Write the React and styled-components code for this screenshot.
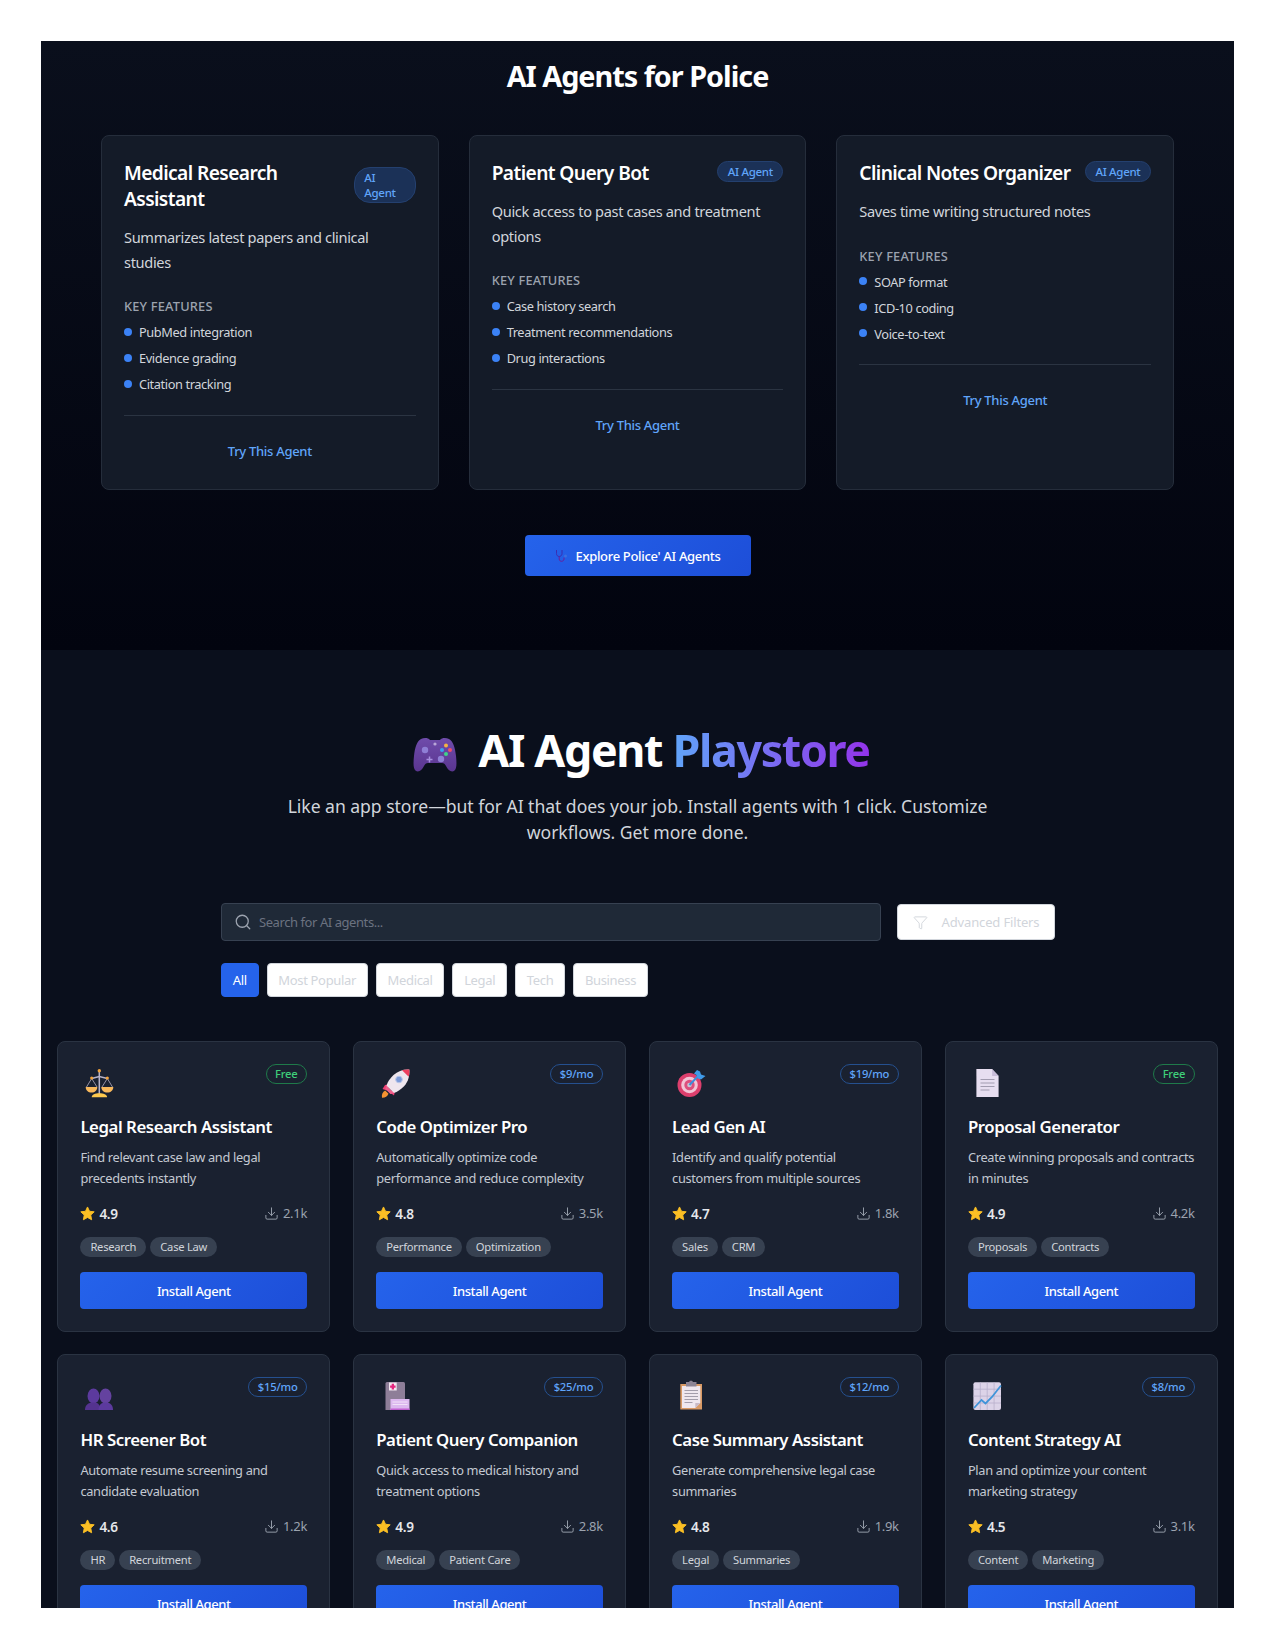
import React from 'react';
import styled, { createGlobalStyle } from 'styled-components';
import { Search, Filter, Download } from 'lucide-react';

const GlobalStyle = createGlobalStyle`
  * { box-sizing: border-box; }
  body {
    margin: 0;
    background: #fff;
    font-family: "Noto Sans", "Open Sans", "Liberation Sans", sans-serif;
  }
`;

const Controller = () => (
  <svg width="60" height="40" viewBox="0 0 60 40">
    <defs>
      <linearGradient id="padFill" x1="0" y1="0" x2="0" y2="1">
        <stop offset="0" stopColor="#6f4cab" />
        <stop offset="1" stopColor="#5a3590" />
      </linearGradient>
    </defs>
    <path d="M16 5c3-1.500 7-1.500 9 1h10c2-2.500 6-2.500 9-1 4 2 6 8 7 17 .7 7 1 13-2 15-3 1.500-6-1-8-5-1-2-2-3-4-3H23c-2 0-3 1-4 3-2 4-5 6.500-8 5-3-2-2.700-8-2-15 1-9 3-15 7-17z" fill="url(#padFill)" />
    <circle cx="20" cy="16" r="3.200" fill="#8f7fd6" />
    <circle cx="36" cy="25" r="3.200" fill="#8f7fd6" />
    <circle cx="30" cy="10" r="1.600" fill="#b9a6d8" />
    <path d="M24.500 22.500v6M21.500 25.500h6" stroke="#a78fe0" strokeWidth="1.500" />
    <circle cx="41" cy="11.500" r="2" fill="#f5b342" />
    <circle cx="37" cy="16" r="2" fill="#3aa0f0" />
    <circle cx="45" cy="16" r="2" fill="#ef4f6a" />
    <circle cx="41" cy="20" r="2" fill="#3fd38a" />
  </svg>
);

const Stethoscope = () => (
  <svg width="15" height="13" viewBox="0 0 15 13" fill="none">
    <path d="M1.500 1v3.500c0 2 1.300 3 2.700 3S7 6.500 7 4.500V1" stroke="#3b2db0" strokeWidth="1" />
    <path d="M4.200 7.500V10c0 1.500 1 2.300 2.300 2.300S9 11.500 9 10V8.500" stroke="#6a1f9c" strokeWidth="1" />
    <circle cx="10.500" cy="7" r="1.500" fill="#3d6fe0" />
  </svg>
);

const Scales = () => (
  <svg width="36" height="36" viewBox="0 0 36 36">
    <path d="M19.300 7v23" stroke="#b9b4c9" strokeWidth="1.500" />
    <path d="M11.700 14.500l7.600-2 8 2" stroke="#b9b4c9" strokeWidth="1.300" fill="none" />
    <path d="M11.700 14.500L6.500 23M11.700 14.500L17 23M27.300 14.500L22 23M27.300 14.500L32.500 23" stroke="#c8c2d6" strokeWidth=".7" fill="none" />
    <circle cx="19.300" cy="6.800" r="1.700" fill="#f2a33c" />
    <circle cx="11.700" cy="14" r="1.600" fill="#f2a33c" />
    <circle cx="27.300" cy="14" r="1.600" fill="#f2a33c" />
    <path d="M5.700 23h11.600c0 3.500-2.500 5.500-5.800 5.500S5.700 26.500 5.700 23z" fill="#f9b95c" />
    <path d="M21.300 23h12c0 3.500-2.600 5.500-6 5.500s-6-2-6-5.500z" fill="#f9b95c" />
    <path d="M11.700 33.300c0-2.600 3.500-4 7.600-4s7.800 1.400 7.800 4z" fill="#ffc94d" />
  </svg>
);

const Rocket = () => (
  <svg width="36" height="36" viewBox="0 0 36 36">
    <path d="M6 33.700c-.6-3 .6-6 3.200-7.200l3.300 3.200c-1.200 2.700-3.500 4.200-6.500 4z" fill="#f59331" />
    <path d="M9 21l5-1-3 6.500-4.500-1.500zM19 27l-1 4.500-4-3 3.500-3z" fill="#ef3f74" />
    <path d="M33.300 5.500c.5 6-1 12-5 16.500-3 3.200-7 6-10.500 7l-7.300-7.300c1-3.600 3.800-7.600 7-10.600C22 7 27.500 5 33.300 5.500z" fill="#efe6ee" />
    <path d="M33.300 5.500c.3 2.700.1 5-.6 7.300l-6.700-6.500c2.300-.8 4.700-1 7.300-.8z" fill="#ee3f5f" />
    <path d="M10.500 21.700l7.300 7.300c-1.500.7-2.500 1-3.400 1.100l-5-5c.1-1 .5-2 1.100-3.400z" fill="#f0608c" />
    <circle cx="23" cy="15.500" r="3.300" fill="#7c9ad8" stroke="#b9c6ea" strokeWidth="1" />
  </svg>
);

const Target = () => (
  <svg width="36" height="36" viewBox="0 0 36 36">
    <circle cx="17.500" cy="21" r="12" fill="#dd3f6d" />
    <circle cx="17.500" cy="21" r="8.300" fill="#f2c5d6" />
    <circle cx="17.500" cy="21" r="5.200" fill="#dd4f7d" />
    <circle cx="17.500" cy="21" r="2.300" fill="#c9c3d2" />
    <path d="M17.500 21L28 10" stroke="#3a8fdc" strokeWidth="2" />
    <path d="M25 6l3 1.500 1 3 4.500 1.500-4.500 3.500-3-1-1.500-3.500-2.500-1.500z" fill="#3f9ae8" />
  </svg>
);

const DocIcon = () => (
  <svg width="36" height="36" viewBox="0 0 36 36">
    <path d="M8.400 5h15.700l6.500 7v21H8.400z" fill="#e7def0" />
    <path d="M24.100 5l6.500 7h-6.500z" fill="#c8bcd8" />
    <path d="M12.500 15.500h14M12.500 19h14M12.500 22.500h14M12.500 26h9" stroke="#9a94a8" strokeWidth=".9" />
  </svg>
);

const People = () => (
  <svg width="36" height="36" viewBox="0 0 36 36">
    <ellipse cx="13.500" cy="19" rx="6" ry="7.500" fill="#5c3a9e" />
    <ellipse cx="25.500" cy="19" rx="6" ry="7.500" fill="#64429f" />
    <path d="M5 33c0-5 3-7.500 8.500-7.500S20 28 20 33z" fill="#54338f" />
    <path d="M18.500 33c0-5 2.500-7.500 7.200-7.500S33 28 33 33z" fill="#5c3a9e" />
  </svg>
);

const Hospital = () => (
  <svg width="36" height="36" viewBox="0 0 36 36">
    <path d="M11 5h16.500a1.500 1.500 0 0 1 1.500 1.500V33H9.500V6.500A1.500 1.500 0 0 1 11 5z" fill="#8e7e98" />
    <path d="M13 5.500h7.700v8H13z" fill="#f3e7f0" />
    <path d="M15.700 6.800h2.300v1.700h1.600v2.300H18v1.700h-2.300v-1.700h-1.600V8.500h1.600z" fill="#e4267e" />
    <path d="M14.500 22H33.500v11H14.500z" fill="#dcb8ef" />
    <path d="M16.500 25h15M16.500 27.500h15" stroke="#f1e0f8" strokeWidth="1" />
    <path d="M14.500 31.500h19V33h-19z" fill="#c05fd0" />
  </svg>
);

const Clipboard = () => (
  <svg width="36" height="36" viewBox="0 0 36 36">
    <path d="M8.300 7h21.700v25.500H8.300z" fill="#d99a65" />
    <path d="M10 9h18.300v17l-5 5H10z" fill="#efe7ee" />
    <path d="M28.300 26l-5 5v-5z" fill="#c9b9c6" />
    <path d="M14 5h3l1-1.200h2L21 5h3.500v4.500H14z" fill="#8c8494" />
    <path d="M12.500 13.500h13.500M12.500 16.500h13.500M12.500 19.500h13.500M12.500 22.500h13.500M12.500 25.500h8" stroke="#8f8a98" strokeWidth=".8" />
  </svg>
);

const ChartUp = () => (
  <svg width="36" height="36" viewBox="0 0 36 36">
    <rect x="5.400" y="5.300" width="27.600" height="27.700" rx="2" fill="#dcd3e8" />
    <path d="M12.300 5.300V33M19.200 5.300V33M26.100 5.300V33M5.400 12.200H33M5.400 19.100H33M5.400 26H33" stroke="#b8aecb" strokeWidth=".8" />
    <path d="M6 31l7.500-8 4 3.500L24 20l9-11.500" stroke="#3f94d9" strokeWidth="1.800" fill="none" />
  </svg>
);

const icons = { Scales, Rocket, Target, DocIcon, People, Hospital, Clipboard, ChartUp };

const policeAgents = [
  {
    name: 'Medical Research Assistant',
    desc: 'Summarizes latest papers and clinical studies',
    features: ['PubMed integration', 'Evidence grading', 'Citation tracking'],
  },
  {
    name: 'Patient Query Bot',
    desc: 'Quick access to past cases and treatment options',
    features: ['Case history search', 'Treatment recommendations', 'Drug interactions'],
  },
  {
    name: 'Clinical Notes Organizer',
    desc: 'Saves time writing structured notes',
    features: ['SOAP format', 'ICD-10 coding', 'Voice-to-text'],
  },
];

const storeAgents = [
  { icon: 'Scales', name: 'Legal Research Assistant', desc: 'Find relevant case law and legal precedents instantly', price: 'Free', rating: '4.9', downloads: '2.1k', tags: ['Research', 'Case Law'] },
  { icon: 'Rocket', name: 'Code Optimizer Pro', desc: 'Automatically optimize code performance and reduce complexity', price: '$9/mo', rating: '4.8', downloads: '3.5k', tags: ['Performance', 'Optimization'] },
  { icon: 'Target', name: 'Lead Gen AI', desc: 'Identify and qualify potential customers from multiple sources', price: '$19/mo', rating: '4.7', downloads: '1.8k', tags: ['Sales', 'CRM'] },
  { icon: 'DocIcon', name: 'Proposal Generator', desc: 'Create winning proposals and contracts in minutes', price: 'Free', rating: '4.9', downloads: '4.2k', tags: ['Proposals', 'Contracts'] },
  { icon: 'People', name: 'HR Screener Bot', desc: 'Automate resume screening and candidate evaluation', price: '$15/mo', rating: '4.6', downloads: '1.2k', tags: ['HR', 'Recruitment'] },
  { icon: 'Hospital', name: 'Patient Query Companion', desc: 'Quick access to medical history and treatment options', price: '$25/mo', rating: '4.9', downloads: '2.8k', tags: ['Medical', 'Patient Care'] },
  { icon: 'Clipboard', name: 'Case Summary Assistant', desc: 'Generate comprehensive legal case summaries', price: '$12/mo', rating: '4.8', downloads: '1.9k', tags: ['Legal', 'Summaries'] },
  { icon: 'ChartUp', name: 'Content Strategy AI', desc: 'Plan and optimize your content marketing strategy', price: '$8/mo', rating: '4.5', downloads: '3.1k', tags: ['Content', 'Marketing'] },
];

const categories = ['All', 'Most Popular', 'Medical', 'Legal', 'Tech', 'Business'];

const App = () => (
  <>
    <GlobalStyle />
    <Page>
      <PoliceSection>
        <PoliceTitle>AI Agents for Police</PoliceTitle>
        <PoliceGrid>
          {policeAgents.map((agent) => (
            <PoliceCard key={agent.name}>
              <PoliceCardHead>
                <PoliceCardName>{agent.name}</PoliceCardName>
                <AgentBadge>AI Agent</AgentBadge>
              </PoliceCardHead>
              <PoliceDesc>{agent.desc}</PoliceDesc>
              <FeatureLabel>Key Features</FeatureLabel>
              <FeatureList>
                {agent.features.map((f) => (
                  <FeatureItem key={f}>{f}</FeatureItem>
                ))}
              </FeatureList>
              <TryLink>Try This Agent</TryLink>
            </PoliceCard>
          ))}
        </PoliceGrid>
        <ExploreRow>
          <ExploreButton>
            <Stethoscope />
            Explore Police' AI Agents
          </ExploreButton>
        </ExploreRow>
      </PoliceSection>

      <StoreSection>
        <Hero>
          <HeroTitle>
            <Controller />
            AI Agent <Gradient>Playstore</Gradient>
          </HeroTitle>
          <HeroText>
            Like an app store—but for AI that does your job. Install agents with 1 click. Customize
            workflows. Get more done.
          </HeroText>
        </Hero>

        <Controls>
          <SearchRow>
            <SearchBox>
              <Search size={18} color="#9ca3af" strokeWidth={1.7} />
              <SearchInput placeholder="Search for AI agents..." />
            </SearchBox>
            <FilterButton>
              <Filter size={15} color="#d1d5db" strokeWidth={1.5} />
              Advanced Filters
            </FilterButton>
          </SearchRow>
          <Categories>
            {categories.map((c, i) => (
              <CategoryButton key={c} $active={i === 0}>{c}</CategoryButton>
            ))}
          </Categories>
        </Controls>

        <StoreGrid>
          {storeAgents.map((agent) => {
            const Icon = icons[agent.icon];
            return (
              <StoreCard key={agent.name}>
                <StoreCardHead>
                  <Icon />
                  <PriceBadge $free={agent.price === 'Free'}>{agent.price}</PriceBadge>
                </StoreCardHead>
                <StoreName>{agent.name}</StoreName>
                <StoreDesc>{agent.desc}</StoreDesc>
                <StatsRow>
                  <Rating>
                    <svg width="15" height="15" viewBox="0 0 24 24">
                      <path d="M12 1.500l3.200 6.900 7.500.9-5.500 5.200 1.400 7.500-6.600-3.700-6.600 3.700 1.400-7.500L1.300 9.300l7.500-.9z" fill="#fbbf24" stroke="#fbbf24" strokeWidth="1.500" strokeLinejoin="round" />
                    </svg>
                    {agent.rating}
                  </Rating>
                  <Downloads>
                    <Download size={15} strokeWidth={1.5} />
                    {agent.downloads}
                  </Downloads>
                </StatsRow>
                <TagRow>
                  {agent.tags.map((t) => (
                    <Tag key={t}>{t}</Tag>
                  ))}
                </TagRow>
                <InstallButton>Install Agent</InstallButton>
              </StoreCard>
            );
          })}
        </StoreGrid>
      </StoreSection>
    </Page>
  </>
);

export default App;

const Page = styled.div`
  width: 1193px;
  height: 1567px;
  margin: 41px 0 0 41px;
  overflow: hidden;
`;

const PoliceSection = styled.section`
  height: 609px;
  padding: 16px 60px 0;
  background: linear-gradient(180deg, #0a0f1c 0%, #02040f 100%);
`;

const PoliceTitle = styled.h2`
  margin: 0;
  height: 38px;
  font-size: 28.800px;
  line-height: 38px;
  font-weight: 700;
  letter-spacing: -1px;
  color: #fff;
  text-align: center;
`;

const PoliceGrid = styled.div`
  display: grid;
  grid-template-columns: repeat(3, 1fr);
  gap: 30px;
  margin-top: 40px;
`;

const PoliceCard = styled.div`
  display: flex;
  flex-direction: column;
  height: 355px;
  padding: 24px 22px 22px;
  background: #141b28;
  border: 1px solid #252d3b;
  border-radius: 8px;
`;

const PoliceCardHead = styled.div`
  display: flex;
  justify-content: space-between;
  align-items: center;
  gap: 14px;
  margin-bottom: 13px;
`;

const PoliceCardName = styled.h3`
  margin: 0;
  font-size: 19.200px;
  line-height: 26px;
  font-weight: 600;
  letter-spacing: -0.6px;
  color: #fff;
`;

const AgentBadge = styled.span`
  flex-shrink: 1;
  margin-bottom: 3px;
  padding: 2px 9.500px;
  background: #1b3157;
  border: 1px solid #24406f;
  border-radius: 16px;
  font-size: 11.500px;
  line-height: 15px;
  font-weight: 500;
  letter-spacing: -0.3px;
  color: #60a5fa;
`;

const PoliceDesc = styled.p`
  margin: 0 0 23px;
  font-size: 14.600px;
  line-height: 24.500px;
  letter-spacing: -0.34px;
  color: #d1d5db;
`;

const FeatureLabel = styled.div`
  font-size: 12.800px;
  line-height: 18px;
  font-weight: 500;
  letter-spacing: 0.2px;
  text-transform: uppercase;
  color: #9ca3af;
`;

const FeatureList = styled.ul`
  list-style: none;
  margin: 4px 0 0;
  padding: 0 0 17.500px;
  border-bottom: 1px solid #2b3442;
`;

const FeatureItem = styled.li`
  display: flex;
  align-items: center;
  gap: 7px;
  height: 26px;
  font-size: 12.800px;
  letter-spacing: -0.4px;
  color: #d1d5db;

  &::before {
    content: '';
    width: 8px;
    height: 8px;
    border-radius: 50%;
    background: #3b82f6;
    margin-top: -1px;
  }
`;

const TryLink = styled.a`
  display: block;
  margin-top: 25px;
  font-size: 13px;
  line-height: 20px;
  font-weight: 500;
  letter-spacing: -0.3px;
  color: #60a5fa;
  text-align: center;
`;

const ExploreRow = styled.div`
  display: flex;
  justify-content: center;
  margin-top: 45px;
`;

const ExploreButton = styled.button`
  display: flex;
  align-items: center;
  justify-content: center;
  gap: 6px;
  width: 226px;
  height: 41px;
  border: 0;
  border-radius: 4px;
  background: linear-gradient(135deg, #2563eb, #1d4ed8);
  color: #fff;
  font-family: inherit;
  font-size: 13px;
  font-weight: 500;
  letter-spacing: -0.32px;
`;

const StoreSection = styled.section`
  height: 958px;
  padding: 0 16px;
  background: #0a0f1c;
`;

const Hero = styled.div`
  padding-top: 73px;
  text-align: center;
`;

const HeroTitle = styled.h1`
  margin: 0;
  font-size: 44.800px;
  line-height: 54px;
  font-weight: 700;
  letter-spacing: -1.35px;
  color: #fff;

  svg {
    vertical-align: -7px;
    margin-right: 13px;
  }
`;

const Gradient = styled.span`
  background: linear-gradient(90deg, #60a5fa, #9333ea);
  -webkit-background-clip: text;
  background-clip: text;
  color: transparent;
`;

const HeroText = styled.p`
  width: 720px;
  margin: 16px auto 0;
  font-size: 17.600px;
  line-height: 26px;
  letter-spacing: -0.05px;
  color: #d1d5db;
`;

const Controls = styled.div`
  margin: 58px 0 0 164px;
`;

const SearchRow = styled.div`
  display: flex;
  align-items: center;
  gap: 16px;
`;

const SearchBox = styled.div`
  display: flex;
  align-items: center;
  gap: 7px;
  width: 660px;
  height: 38px;
  padding: 0 12px;
  background: #1f2937;
  border: 1px solid #374151;
  border-radius: 4px;
`;

const SearchInput = styled.input`
  flex: 1;
  padding: 0;
  border: 0;
  outline: 0;
  background: transparent;
  font-family: inherit;
  font-size: 13px;
  letter-spacing: -0.43px;
  color: #fff;

  &::placeholder {
    color: #6b7280;
  }
`;

const FilterButton = styled.button`
  display: flex;
  align-items: center;
  justify-content: center;
  gap: 14px;
  width: 158px;
  height: 36px;
  background: #fff;
  border: 1px solid #d1d5db;
  border-radius: 4px;
  font-family: inherit;
  font-size: 13px;
  letter-spacing: -0.15px;
  color: #d1d5db;
`;

const Categories = styled.div`
  display: flex;
  gap: 8px;
  margin-top: 22px;
`;

const CategoryButton = styled.button`
  height: 34px;
  padding: 0 10.750px;
  border-radius: 4px;
  border: 1px solid ${(p) => (p.$active ? '#2563eb' : '#d1d5db')};
  background: ${(p) => (p.$active ? '#2563eb' : '#fff')};
  color: ${(p) => (p.$active ? '#fff' : '#d1d5db')};
  font-family: inherit;
  font-size: 13px;
  font-weight: 400;
  letter-spacing: -0.33px;
`;

const StoreGrid = styled.div`
  display: grid;
  grid-template-columns: repeat(4, 1fr);
  gap: 22.400px;
  margin-top: 44px;
`;

const StoreCard = styled.div`
  height: 290.500px;
  padding: 22.400px;
  background: #1a2130;
  border: 1px solid #2a3342;
  border-radius: 8px;
`;

const StoreCardHead = styled.div`
  display: flex;
  justify-content: space-between;
  align-items: flex-start;
`;

const PriceBadge = styled.span`
  height: 20px;
  padding: 0 8.500px;
  border-radius: 10px;
  border: 1px solid ${(p) => (p.$free ? '#1f7a4a' : '#25508f')};
  color: ${(p) => (p.$free ? '#3fcf7a' : '#60a5fa')};
  font-size: 11.200px;
  line-height: 18px;
  font-weight: 500;
  letter-spacing: -0.2px;
`;

const StoreName = styled.h3`
  margin: 14px 0 0;
  font-size: 16.800px;
  line-height: 26px;
  font-weight: 600;
  letter-spacing: -0.45px;
  color: #fff;
`;

const StoreDesc = styled.p`
  margin: 7px 0 0;
  font-size: 12.800px;
  line-height: 21px;
  letter-spacing: -0.32px;
  color: #c4c9d2;
`;

const StatsRow = styled.div`
  display: flex;
  justify-content: space-between;
  align-items: center;
  margin-top: 14px;
  height: 20px;
`;

const Rating = styled.div`
  display: flex;
  align-items: center;
  gap: 4px;
  font-size: 13.600px;
  font-weight: 600;
  letter-spacing: -0.3px;
  color: #e5e7eb;
`;

const Downloads = styled.div`
  display: flex;
  align-items: center;
  gap: 4px;
  font-size: 13px;
  letter-spacing: -0.3px;
  color: #9ca3af;
`;

const TagRow = styled.div`
  display: flex;
  gap: 4px;
  margin-top: 14px;
`;

const Tag = styled.span`
  height: 20px;
  padding: 0 10px;
  border-radius: 10px;
  background: #374151;
  color: #d1d5db;
  font-size: 11.200px;
  line-height: 20px;
  letter-spacing: -0.25px;
`;

const InstallButton = styled.button`
  display: block;
  width: 100%;
  height: 37px;
  margin-top: 15px;
  border: 0;
  border-radius: 4px;
  background: linear-gradient(135deg, #2563eb, #1d4ed8);
  color: #fff;
  font-family: inherit;
  font-size: 13px;
  font-weight: 500;
  letter-spacing: -0.42px;
`;
